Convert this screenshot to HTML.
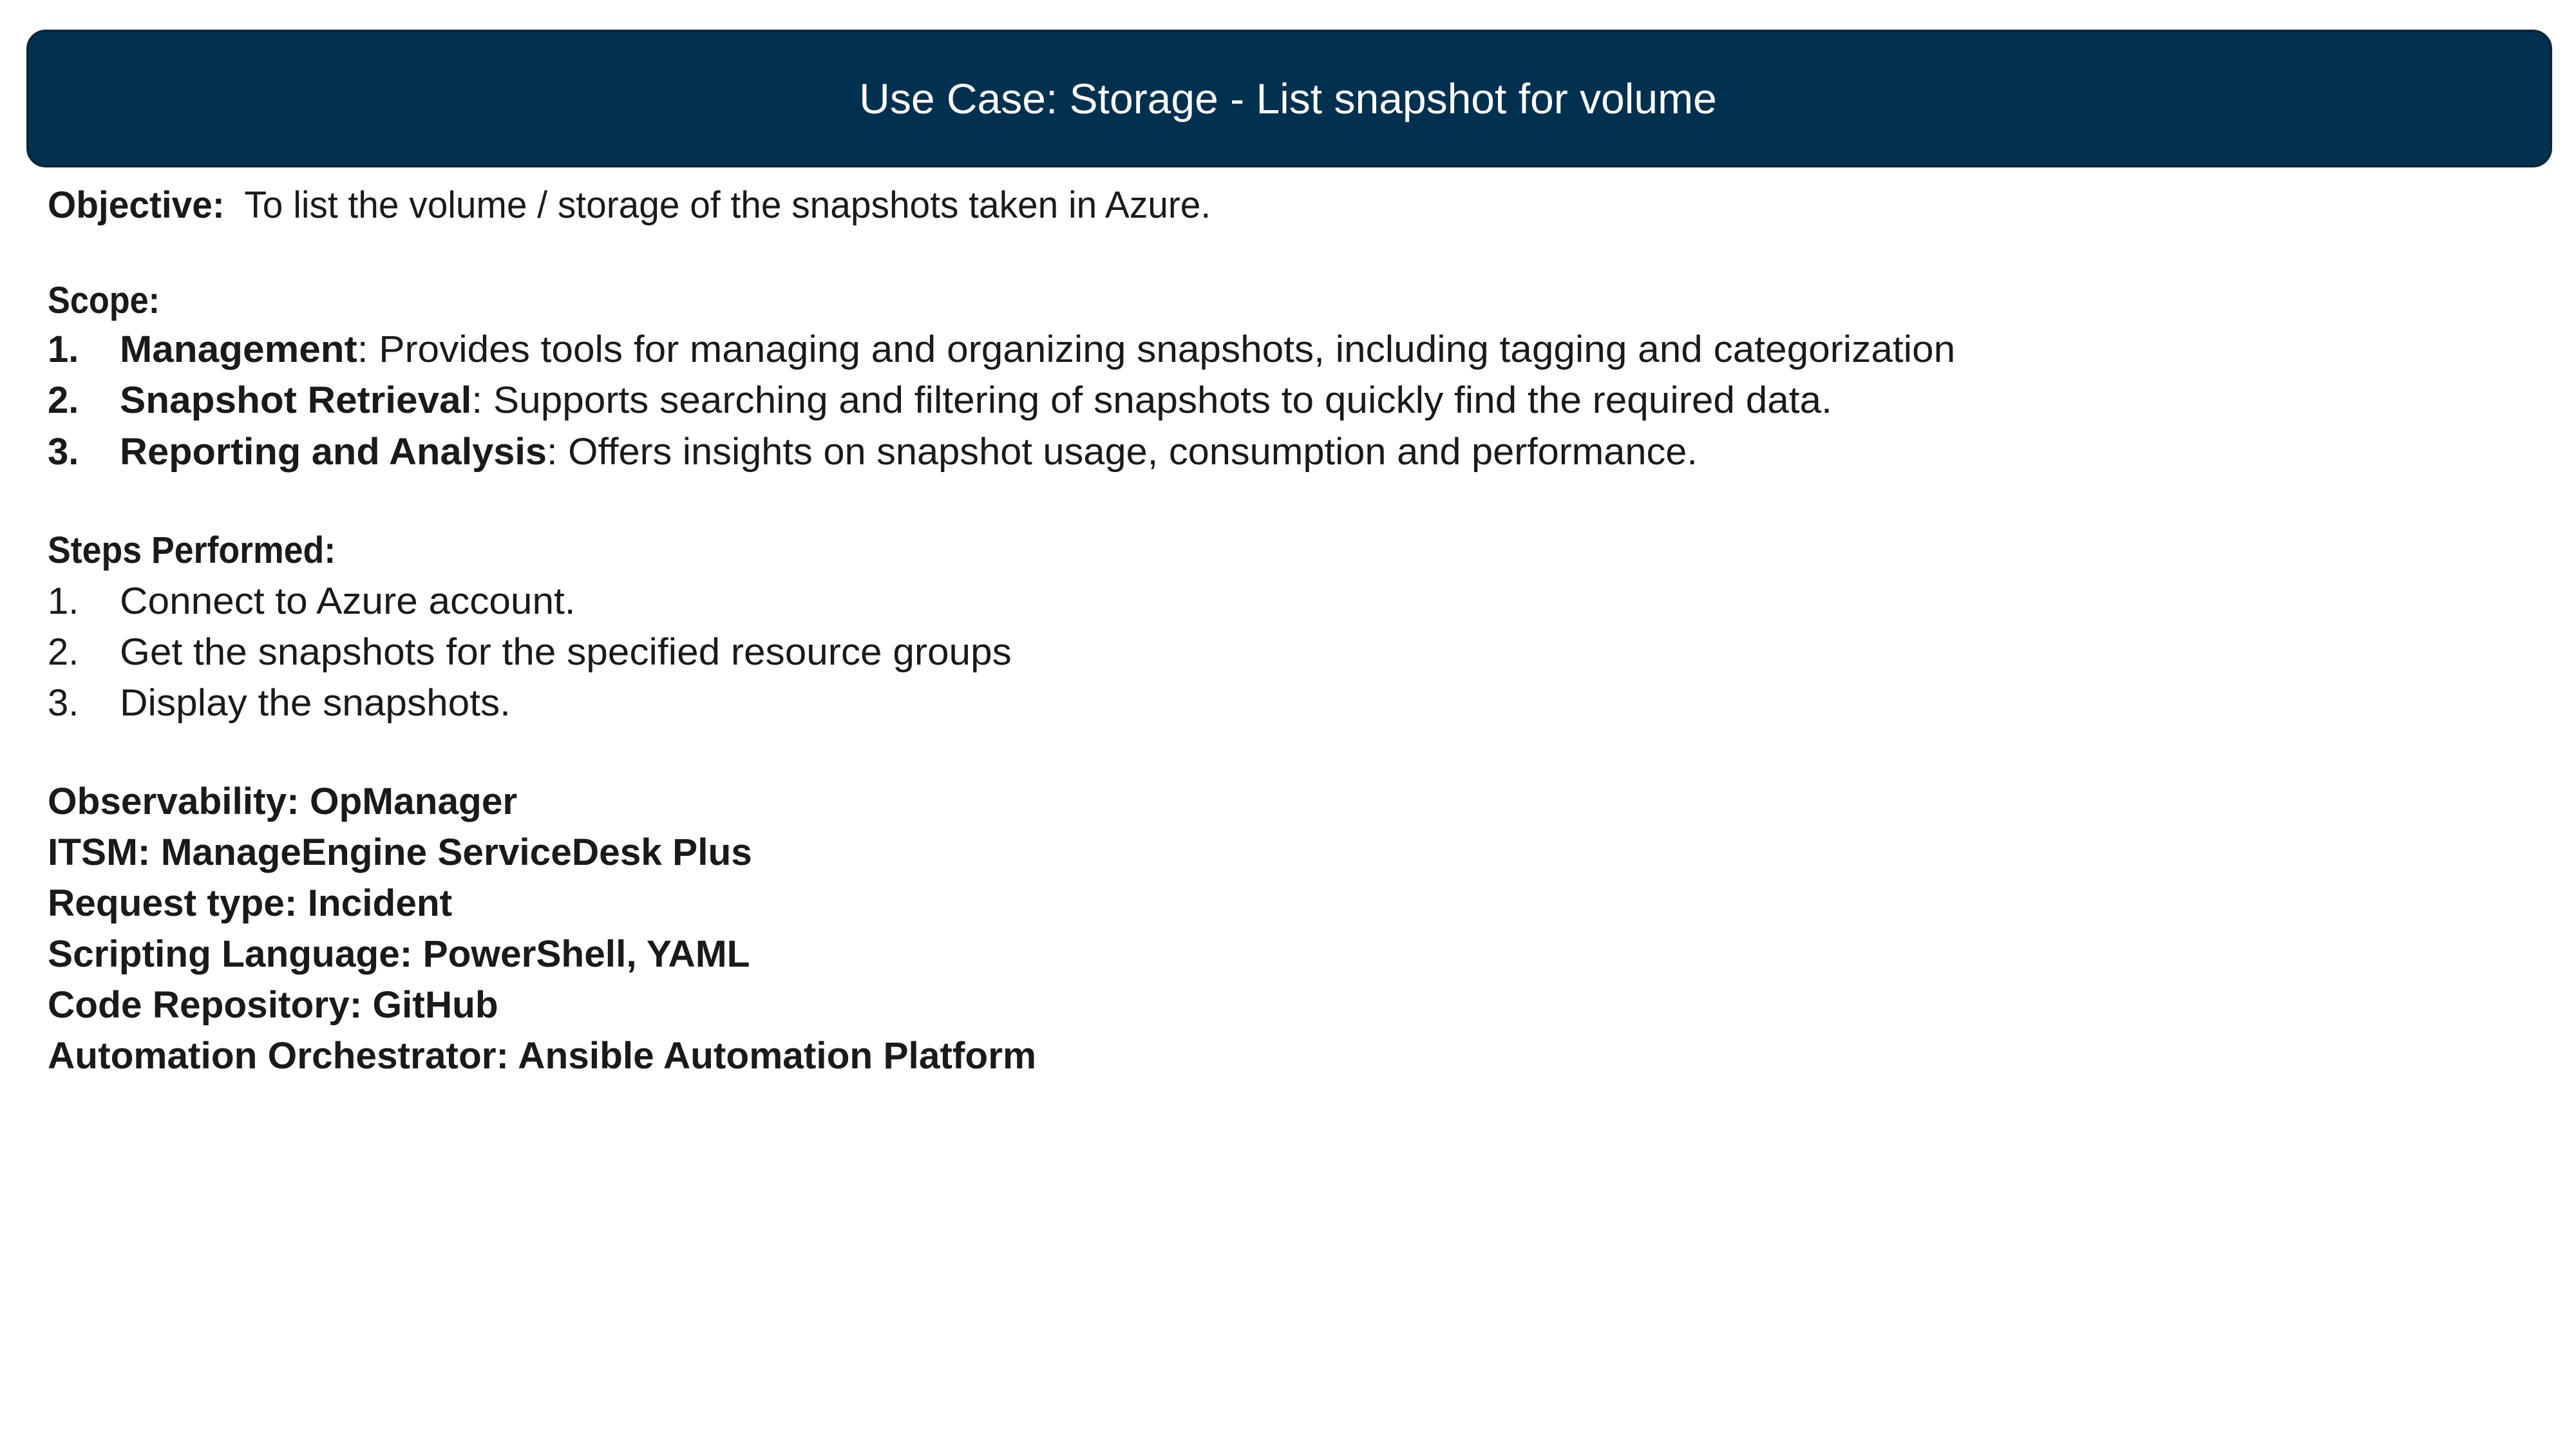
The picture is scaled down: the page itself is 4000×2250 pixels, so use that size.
<!DOCTYPE html>
<html><head><meta charset="utf-8"><style>
html,body{margin:0;padding:0;background:#fff;}
body{width:4000px;height:2250px;position:relative;overflow:hidden;font-family:"Liberation Sans",sans-serif;color:#1a1a1a;}
.hdr{position:absolute;left:41px;top:46px;width:3914px;height:206px;background:#02304f;border:4px solid #0b2638;border-radius:30px;}
.title{position:absolute;left:0;top:113px;width:4000px;text-align:center;font-size:66px;line-height:80px;color:#fff;}
.title span{display:inline-block;transform:scaleX(1.0);}
.l{position:absolute;left:74px;font-size:58px;line-height:80px;white-space:nowrap;transform:scaleX(1.04);transform-origin:left center;}
.bl{transform:scaleX(1.01);}
.n{position:absolute;left:74px;font-size:58px;line-height:80px;}
.t{left:186px;}
b{font-weight:bold;}
</style></head><body>
<div class="hdr"></div>
<div class="title"><span>Use Case: Storage - List snapshot for volume</span></div>

<div class="l" style="top:279px;transform:scaleX(0.98)"><b>Objective:</b>&nbsp; To list the volume / storage of the snapshots taken in Azure.</div>
<div class="l" style="top:427px;transform:scaleX(0.9)"><b>Scope:</b></div>
<div class="n" style="top:503px"><b>1.</b></div>
<div class="l t" style="top:503px"><b>Management</b>: Provides tools for managing and organizing snapshots, including tagging and categorization</div>
<div class="n" style="top:582px"><b>2.</b></div>
<div class="l t" style="top:582px"><b>Snapshot Retrieval</b>: Supports searching and filtering of snapshots to quickly find the required data.</div>
<div class="n" style="top:662px"><b>3.</b></div>
<div class="l t" style="top:662px;transform:scaleX(1.027)"><b>Reporting and Analysis</b>: Offers insights on snapshot usage, consumption and performance.</div>

<div class="l" style="top:815px;transform:scaleX(0.925)"><b>Steps Performed:</b></div>
<div class="n" style="top:894px">1.</div>
<div class="l t" style="top:894px">Connect to Azure account.</div>
<div class="n" style="top:973px">2.</div>
<div class="l t" style="top:973px">Get the snapshots for the specified resource groups</div>
<div class="n" style="top:1052px">3.</div>
<div class="l t" style="top:1052px">Display the snapshots.</div>

<div class="l bl" style="top:1205px"><b>Observability: OpManager</b></div>
<div class="l bl" style="top:1284px"><b>ITSM: ManageEngine ServiceDesk Plus</b></div>
<div class="l bl" style="top:1363px"><b>Request type: Incident</b></div>
<div class="l bl" style="top:1442px"><b>Scripting Language: PowerShell, YAML</b></div>
<div class="l bl" style="top:1521px"><b>Code Repository: GitHub</b></div>
<div class="l bl" style="top:1600px"><b>Automation Orchestrator: Ansible Automation Platform</b></div>
</body></html>
